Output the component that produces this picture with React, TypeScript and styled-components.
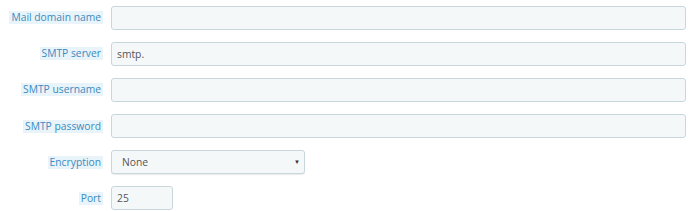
import React from "react";
import styled, { createGlobalStyle } from "styled-components";

const Global = createGlobalStyle`
  html, body { margin: 0; padding: 0; background: #fff; }
  body { font-family: "Open Sans", "Liberation Sans", sans-serif; }
`;

const Form = styled.div`
  display: grid;
  grid-template-columns: 103px 1fr;
  column-gap: 8px;
  row-gap: 12.6px;
  padding: 6px 8px 0 0;
  width: 694px;
  box-sizing: border-box;
  align-items: center;
`;

const LabelCell = styled.div`
  display: flex;
  justify-content: flex-end;
`;

const Label = styled.span`
  background: #e9f3fa;
  color: #3a8bc0;
  font-size: 10.3px;
  line-height: 13px;
  padding: 0 2px;
`;

const Field = styled.div<{ $width?: number }>`
  width: ${(p) => (p.$width ? `${p.$width}px` : "100%")};
  height: 23.5px;
  box-sizing: border-box;
  background: #f5f8f9;
  border: 1px solid #c9d6dc;
  border-radius: 3px;
  display: flex;
  align-items: center;
  padding: 0 4px 0 5px;
  font-size: 10.3px;
  color: #555;
  position: relative;
`;

const SelectField = styled(Field)`
  box-shadow: 0 1px 1px rgba(0, 0, 0, 0.08);
  padding-left: 10px;
`;

const Arrow = styled.span`
  position: absolute;
  right: 4px;
  top: 50%;
  transform: translateY(-50%);
  font-size: 6px;
  color: #333;
`;

const rows: { label: string; value?: string }[] = [
  { label: "Mail domain name" },
  { label: "SMTP server", value: "smtp." },
  { label: "SMTP username" },
  { label: "SMTP password" },
];

export default function App() {
  return (
    <>
      <Global />
      <Form>
        {rows.map((r) => (
          <React.Fragment key={r.label}>
            <LabelCell>
              <Label>{r.label}</Label>
            </LabelCell>
            <Field>{r.value ?? ""}</Field>
          </React.Fragment>
        ))}
        <LabelCell>
          <Label>Encryption</Label>
        </LabelCell>
        <SelectField $width={194}>
          None
          <Arrow>▼</Arrow>
        </SelectField>
        <LabelCell>
          <Label>Port</Label>
        </LabelCell>
        <Field $width={62}>25</Field>
      </Form>
    </>
  );
}
